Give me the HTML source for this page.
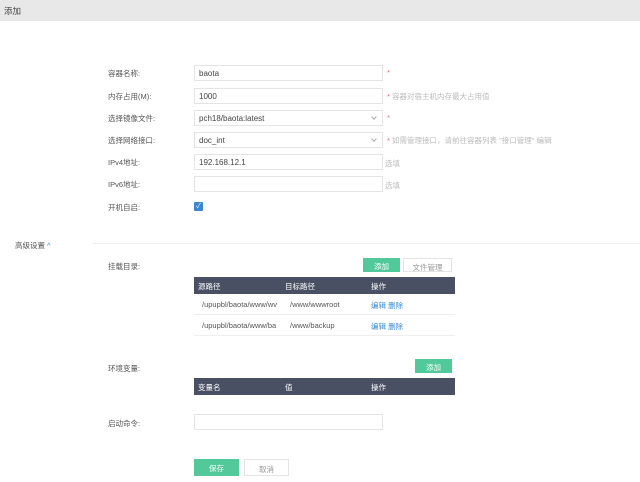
<!DOCTYPE html>
<html><head><meta charset="utf-8"><style>
*{margin:0;padding:0;box-sizing:border-box}
body{width:640px;height:482px;background:#fff;font-family:"Liberation Sans","Noto Sans CJK SC",sans-serif;font-size:7.5px;color:#555;position:relative;overflow:hidden}
.a{position:absolute}
.hdr{left:0;top:0;width:640px;height:21px;background:#e8e8e8;font-size:8.5px;color:#444;padding:5px 0 0 4px}
.lbl{left:108px;color:#555}
.inp{left:194px;width:189px;height:16px;border:1px solid #e4e4e4;background:#fff;padding:3px 0 0 4px;color:#444;font-size:8px}
.star{color:#e66;}
.hint{color:#bbb}
.chev{position:absolute;right:6px;top:4px;width:4px;height:4px;border-right:1px solid #aaa;border-bottom:1px solid #aaa;transform:rotate(45deg)}
.btn{height:14px;text-align:center;padding-top:3px;color:#fff;background:#52c99a}
.btn2{height:14px;text-align:center;padding-top:3px;color:#999;background:#fff;border:1px solid #e4e4e4}
.th{left:194px;width:261px;height:17px;background:#4a5063;color:#fff}
.th span{position:absolute;top:4px}
.tr span{position:absolute;top:6px}
.tr{left:194px;width:261px;height:21px;border-bottom:1px solid #eee}
.lk{color:#3a8bd6}
</style></head><body>
<div class="a hdr">添加</div>

<div class="a lbl" style="top:68px">容器名称:</div>
<div class="a inp" style="top:65px">baota</div>
<div class="a star" style="left:387px;top:68px">*</div>

<div class="a lbl" style="top:91px">内存占用(M):</div>
<div class="a inp" style="top:88px">1000</div>
<div class="a hint" style="left:387px;top:91px"><span class="star">*</span> 容器对宿主机内存最大占用值</div>

<div class="a lbl" style="top:113px">选择镜像文件:</div>
<div class="a inp" style="top:110px">pch18/baota:latest<i class="chev"></i></div>
<div class="a star" style="left:387px;top:113px">*</div>

<div class="a lbl" style="top:135px">选择网络接口:</div>
<div class="a inp" style="top:132px">doc_int<i class="chev"></i></div>
<div class="a hint" style="left:387px;top:135px"><span class="star">*</span> 如需管理接口，请前往容器列表 "接口管理" 编辑</div>

<div class="a lbl" style="top:157px">IPv4地址:</div>
<div class="a inp" style="top:154px">192.168.12.1</div>
<div class="a hint" style="left:385px;top:158px">选填</div>

<div class="a lbl" style="top:179px">IPv6地址:</div>
<div class="a inp" style="top:176px"></div>
<div class="a hint" style="left:385px;top:180px">选填</div>

<div class="a lbl" style="top:202px">开机自启:</div>
<div class="a" style="left:194px;top:202px;width:9px;height:9px;background:#3a86d6;border-radius:1px;color:#fff;font-size:7px;line-height:9px;text-align:center">✓</div>

<div class="a" style="left:15px;top:240px;color:#555">高级设置 <span style="color:#3a8bd6">^</span></div>
<div class="a" style="left:92px;top:243px;width:548px;height:1px;background:#eee"></div>

<div class="a lbl" style="top:261px">挂载目录:</div>
<div class="a btn" style="left:363px;top:258px;width:37px">添加</div>
<div class="a btn2" style="left:403px;top:258px;width:49px">文件管理</div>
<div class="a th" style="top:277px"><span style="left:4px">源路径</span><span style="left:91px">目标路径</span><span style="left:177px">操作</span></div>
<div class="a tr" style="top:294px"><span style="left:8px">/upupbl/baota/www/wv</span><span style="left:96px">/www/wwwroot</span><span style="left:177px" class="lk">编辑 删除</span></div>
<div class="a tr" style="top:315px"><span style="left:8px">/upupbl/baota/www/ba</span><span style="left:96px">/www/backup</span><span style="left:177px" class="lk">编辑 删除</span></div>

<div class="a lbl" style="top:363px">环境变量:</div>
<div class="a btn" style="left:415px;top:359px;width:37px">添加</div>
<div class="a th" style="top:378px"><span style="left:4px">变量名</span><span style="left:91px">值</span><span style="left:177px">操作</span></div>

<div class="a lbl" style="top:418px">启动命令:</div>
<div class="a inp" style="top:414px"></div>

<div class="a btn" style="left:194px;top:459px;width:45px;height:17px;padding-top:4px">保存</div>
<div class="a btn2" style="left:244px;top:459px;width:45px;height:17px;padding-top:4px">取消</div>
</body></html>
